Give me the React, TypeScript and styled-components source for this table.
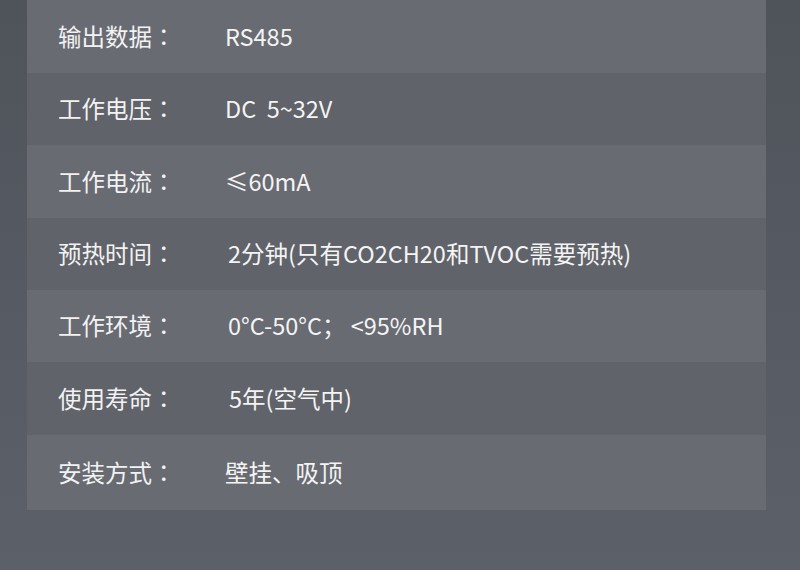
import React from 'react';
import styled, { createGlobalStyle } from 'styled-components';

const GlobalStyle = createGlobalStyle`
  html, body {
    margin: 0;
    padding: 0;
  }
  body {
    width: 800px;
    height: 570px;
    overflow: hidden;
    background: linear-gradient(to bottom, #4f535a 0%, #575b63 60%, #5c6069 100%);
    font-family: "Noto Sans CJK SC", "Noto Sans", sans-serif;
  }
`;

// Page and spec table
const Page = styled.div`
  width: 800px;
  height: 570px;
  box-sizing: border-box;
  padding: 0 34px 0 27px;
`;

const SpecTable = styled.div`
  display: flex;
  flex-direction: column;
  width: 739px;
`;

const Row = styled.div<{ $light: boolean; $h: number }>`
  display: grid;
  grid-template-columns: 167px 1fr;
  align-items: center;
  height: ${p => p.$h}px;
  padding-left: 31px;
  box-sizing: border-box;
  background-color: ${p => (p.$light ? '#686b72' : '#606369')};
`;

const Label = styled.span`
  color: #f2f2f2;
  font-size: 23.5px;
  line-height: 1;
  white-space: nowrap;
`;

// centred full-width colon, as in the reference
const Colon = styled.span`
  font-family: "Noto Sans CJK TC", "Noto Sans CJK SC", sans-serif;
`;

const Value = styled.span<{ $indent: number }>`
  color: #f4f4f4;
  font-size: 23.5px;
  line-height: 1;
  padding-left: ${p => p.$indent}px;
  white-space: pre;
`;

interface Spec {
  label: string;
  value: string;
  indent: number;
  h: number;
}

const specs: Spec[] = [
  { label: '输出数据', value: 'RS485', indent: 0, h: 73 },
  { label: '工作电压', value: 'DC  5~32V', indent: 0, h: 72 },
  { label: '工作电流', value: '≤60mA', indent: 0, h: 73 },
  { label: '预热时间', value: '2分钟(只有CO2CH20和TVOC需要预热)', indent: 3, h: 72 },
  { label: '工作环境', value: '0°C-50°C； <95%RH', indent: 3, h: 72 },
  { label: '使用寿命', value: '5年(空气中)', indent: 4, h: 73 },
  { label: '安装方式', value: '壁挂、吸顶', indent: 0, h: 75 },
];

export default function App() {
  return (
    <>
      <GlobalStyle />
      <Page>
        <SpecTable>
          {specs.map((s, i) => (
            <Row key={s.label} $light={i % 2 === 0} $h={s.h}>
              <Label>
                {s.label}
                <Colon>：</Colon>
              </Label>
              <Value $indent={s.indent}>{s.value}</Value>
            </Row>
          ))}
        </SpecTable>
      </Page>
    </>
  );
}
